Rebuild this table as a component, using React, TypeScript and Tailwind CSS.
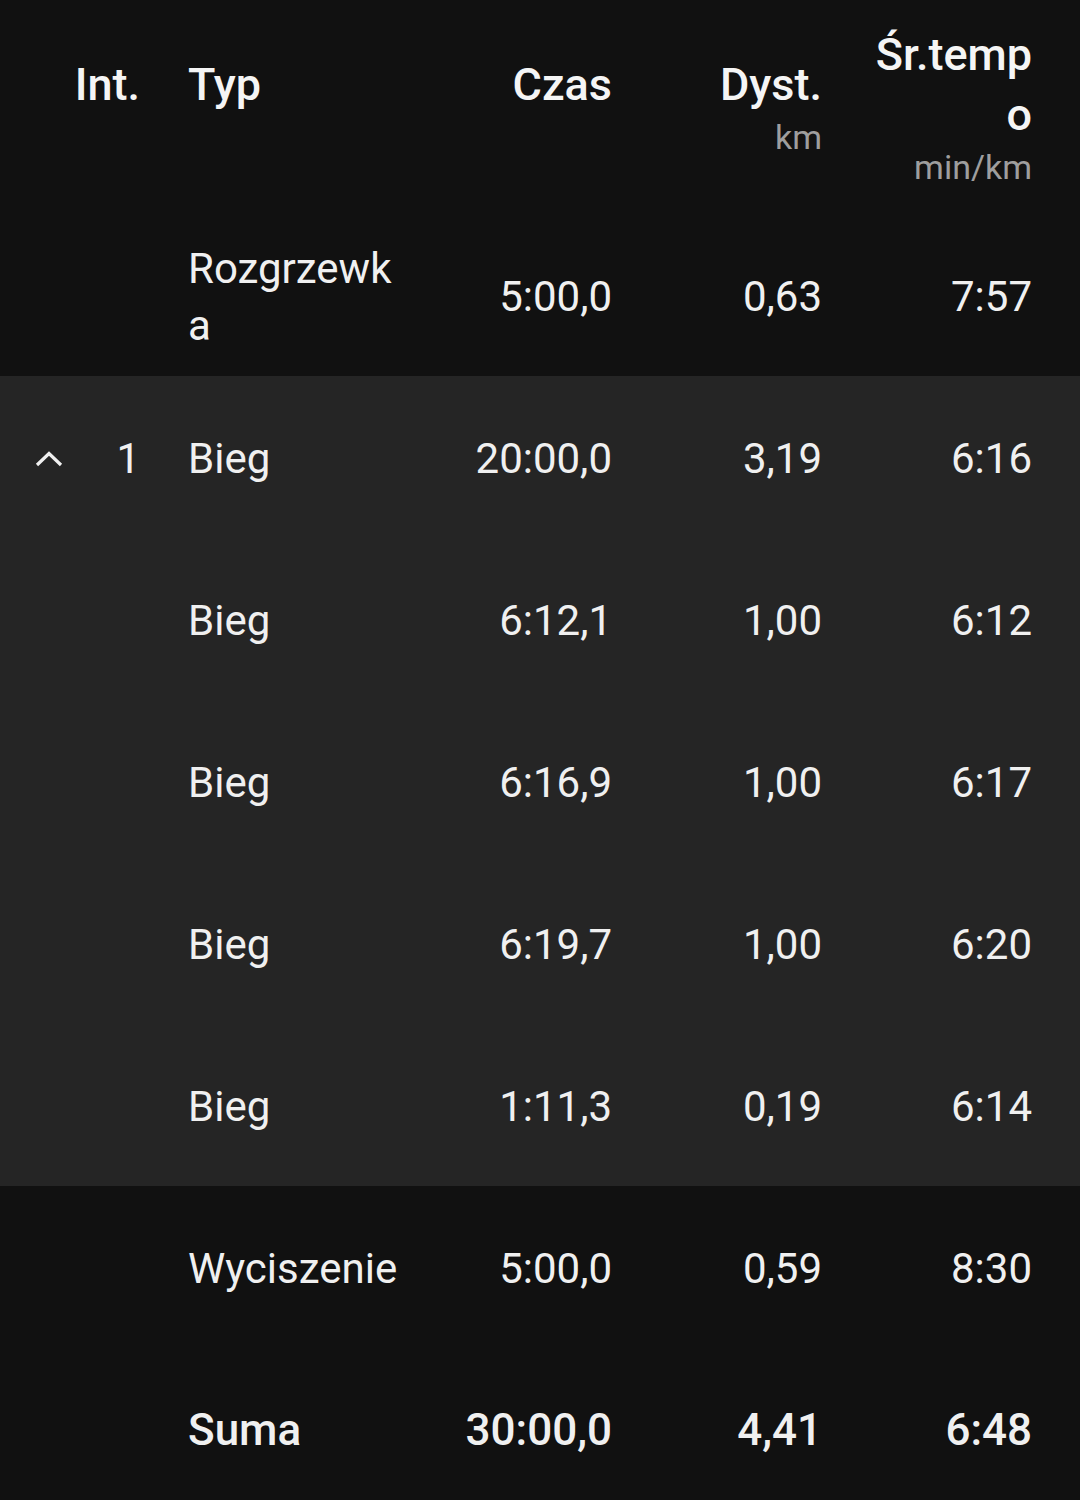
import { ReactNode } from 'react';

type Row = {
  int?: string;
  type: string;
  time: string;
  dist: string;
  pace: string;
  chevron?: boolean;
};

const warmup: Row = { type: 'Rozgrzewka', time: '5:00,0', dist: '0,63', pace: '7:57' };

const group: Row[] = [
  { int: '1', type: 'Bieg', time: '20:00,0', dist: '3,19', pace: '6:16', chevron: true },
  { type: 'Bieg', time: '6:12,1', dist: '1,00', pace: '6:12' },
  { type: 'Bieg', time: '6:16,9', dist: '1,00', pace: '6:17' },
  { type: 'Bieg', time: '6:19,7', dist: '1,00', pace: '6:20' },
  { type: 'Bieg', time: '1:11,3', dist: '0,19', pace: '6:14' },
];

const cooldown: Row = { type: 'Wyciszenie', time: '5:00,0', dist: '0,59', pace: '8:30' };

function ChevronUp() {
  return (
    <svg width="28" height="18" viewBox="0 0 28 18" fill="none" className="text-[#f0f0f0]">
      <polyline points="2,15 14,3.5 26,15" stroke="currentColor" strokeWidth="3.2" />
    </svg>
  );
}

function HeaderCell({ title, unit, className }: { title: string; unit?: string; className: string }) {
  return (
    <div className={className}>
      <div className="font-medium text-[45px] leading-[60px] text-[#f5f5f5] break-all">{title}</div>
      <div className="text-[34px] leading-[44px] text-[#9e9e9e]">{unit ?? '\u00a0'}</div>
    </div>
  );
}

function DataRow({ row, bold }: { row: Row; bold?: boolean }) {
  const text = bold ? 'font-medium text-[44px]' : 'text-[42px]';
  return (
    <div className={`flex items-center h-[162px] pt-[3px] leading-[57px] text-[#f0f0f0] ${text}`}>
      <div className="w-[140px] shrink-0 flex items-center justify-between pl-[35px]">
        <span>{row.chevron ? <ChevronUp /> : null}</span>
        <span>{row.int}</span>
      </div>
      <div className="w-[215px] shrink-0 ml-[48px] break-all">{row.type}</div>
      <div className="w-[209px] shrink-0 text-right">{row.time}</div>
      <div className="w-[210px] shrink-0 text-right">{row.dist}</div>
      <div className="w-[210px] shrink-0 text-right">{row.pace}</div>
    </div>
  );
}

function Section({ children, className }: { children: ReactNode; className?: string }) {
  return <div className={className}>{children}</div>;
}

export default function App() {
  return (
    <div className="w-[1080px] min-h-[1500px] bg-[#111111] font-['Roboto',sans-serif]">
      {/* Column headers */}
      <div className="flex items-center h-[214px]">
        <HeaderCell title="Int." className="w-[140px] shrink-0 text-right" />
        <HeaderCell title="Typ" className="w-[215px] shrink-0 ml-[48px]" />
        <HeaderCell title="Czas" className="w-[209px] shrink-0 text-right" />
        <HeaderCell title="Dyst." unit="km" className="w-[210px] shrink-0 text-right" />
        <div className="w-[210px] shrink-0 flex justify-end">
          <HeaderCell title="Śr.tempo" unit="min/km" className="w-[165px] text-right" />
        </div>
      </div>

      <DataRow row={warmup} />

      {/* Expanded interval group */}
      <Section className="bg-[#252525]">
        {group.map((r, i) => (
          <DataRow key={i} row={r} />
        ))}
      </Section>

      <DataRow row={cooldown} />
      <DataRow row={{ type: 'Suma', time: '30:00,0', dist: '4,41', pace: '6:48' }} bold />
    </div>
  );
}
